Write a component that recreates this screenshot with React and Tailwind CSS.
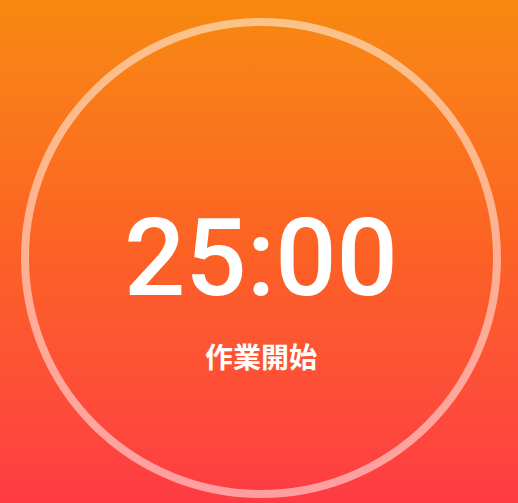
export default function App() {
  return (
    <div className="min-h-[503px] w-full bg-linear-to-b from-[#f7890f] via-[#fc6124] to-[#fe3b43] pt-[18px] pl-[21px] font-['Roboto','Noto_Sans_CJK_JP',sans-serif]">
      <div className="flex h-[480px] w-[480px] items-center justify-center rounded-full border-8 border-white/50">
        <div className="relative flex flex-col items-center">
          <div className="text-[108px] font-medium leading-none text-white">25:00</div>
          <div className="absolute top-full mt-[30px] whitespace-nowrap font-['Noto_Sans_CJK_JP',sans-serif] text-[28px] font-bold leading-none text-white">
            作業開始
          </div>
        </div>
      </div>
    </div>
  );
}
